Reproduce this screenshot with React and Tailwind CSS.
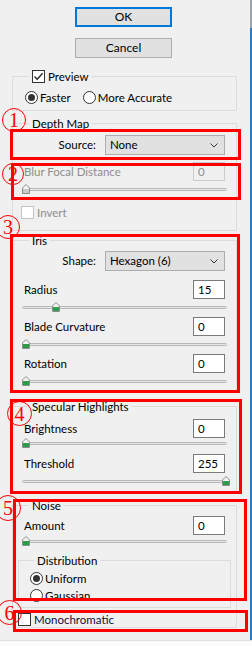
import React from "react";

function Check({ checked, disabled }) {
  return (
    <span
      className={`flex h-[13px] w-[13px] shrink-0 items-center justify-center border bg-white ${
        disabled ? "border-[#c4c4c4]" : "border-[#333333]"
      }`}
    >
      {checked && (
        <svg width="11" height="11" viewBox="0 0 11 11" fill="none" stroke="#222222" strokeWidth="1.3">
          <path d="M1.5 5.5 L4.2 8.3 L9.6 2.2" />
        </svg>
      )}
    </span>
  );
}

function Radio({ checked }) {
  return (
    <span className="flex h-[13px] w-[13px] shrink-0 items-center justify-center rounded-full border border-[#333333] bg-white">
      {checked && <span className="h-[7px] w-[7px] rounded-full bg-[#333333]" />}
    </span>
  );
}

// legend sits at the fieldset's padding-left, so its margin is offset from there
function Group({ title, legend = "ml-[5px] px-[3px]", className = "", children }) {
  return (
    <fieldset className={`border border-[#dcdcdc] ${className}`}>
      <legend className={`leading-[15px] ${legend}`}>{title}</legend>
      {children}
    </fieldset>
  );
}

function Select({ value }) {
  return (
    <div className="flex h-[20px] w-[120px] items-center justify-between border border-[#adadad] bg-[#e1e1e1] pl-[4px] pr-[6px]">
      <span>{value}</span>
      <svg width="8" height="5" viewBox="0 0 8 5" fill="none" stroke="#333333" strokeWidth="1">
        <path d="M0.5 0.5 L4 4 L7.5 0.5" />
      </svg>
    </div>
  );
}

function NumField({ value, disabled }) {
  return (
    <div
      className={`h-[19px] w-[32px] border pl-[4px] leading-[17px] ${
        disabled ? "border-[#cccccc] bg-[#f0f0f0] text-[#8d8d8d]" : "border-[#7a7a7a] bg-white"
      }`}
    >
      {value}
    </div>
  );
}

function FieldRow({ label, value, disabled, className = "" }) {
  return (
    <div className={`flex items-center justify-between ${className}`}>
      <span className={disabled ? "text-[#8d8d8d]" : ""}>{label}</span>
      <NumField value={value} disabled={disabled} />
    </div>
  );
}

function Slider({ value, max = 100, disabled, className = "h-[18px] pt-[7px]" }) {
  const left = -1 + (value / max) * 200;
  return (
    <div className={`mx-[-2px] ${className}`}>
      <div className="relative h-[3px] rounded-full border border-[#b8b8b8] bg-[#e7e7e7]">
        <svg className="absolute top-[-5px]" style={{ left }} width="8" height="10" viewBox="0 0 8 10">
          <path d="M4 0.5 L7.5 4 L7.5 9.5 L0.5 9.5 L0.5 4 Z" fill="#f4f4f4" stroke="#8c8c8c" />
          <path d="M1 5 H7 V9 H1 Z" fill={disabled ? "#c8c8c8" : "#2a9d46"} />
        </svg>
      </div>
    </div>
  );
}

function Circled({ n, className }) {
  return (
    <div
      className={`absolute flex items-center justify-center rounded-full border border-[#ff0000] font-['Liberation_Serif',serif] text-[20px] leading-none text-[#ff0000] ${className}`}
    >
      {n}
    </div>
  );
}

export default function App() {
  return (
    <div className="relative flex h-[646px] w-[252px] flex-col overflow-hidden bg-[#f0f0f0] font-[Lato,sans-serif] text-[11.5px] text-black">
      <div className="flex h-[640px]">
        <div className="flex w-[250px] flex-col pt-[7px]">
          <button className="ml-[75px] h-[20px] w-[97px] border-2 border-[#0078d7] bg-[#e1e1e1] text-[12px] leading-[16px]">
            OK
          </button>
          <button className="ml-[75px] mt-[11px] h-[20px] w-[97px] border border-[#adadad] bg-[#e1e1e1] text-[12px] leading-[18px]">
            Cancel
          </button>

          {/* PREVIEW */}
          <Group
            legend="ml-[4px] px-[3px]"
            className="ml-[12px] mt-[11px] w-[225px] pb-[5px] pl-[12px] pt-[6px]"
            title={
              <span className="flex items-center gap-[3px]">
                <Check checked />
                Preview
              </span>
            }
          >
            <div className="flex items-center gap-[12px] leading-[15px]">
              <span className="flex items-center gap-[2px]">
                <Radio checked />
                Faster
              </span>
              <span className="flex items-center gap-[2px]">
                <Radio />
                More Accurate
              </span>
            </div>
          </Group>

          {/* DEPTH MAP */}
          <Group title="Depth Map" className="ml-[12px] mt-[5px] w-[225px] px-[11px] pb-[10px] pt-[4px]">
            <div className="flex items-center justify-end gap-[9px]">
              <span>Source:</span>
              <Select value="None" />
            </div>
            <FieldRow className="mt-[7px]" label="Blur Focal Distance" value="0" disabled />
            <Slider value={0} disabled />
            <div className="ml-[-3px] mt-[6px] flex items-center gap-[3px] leading-[15px] text-[#8d8d8d]">
              <Check disabled />
              Invert
            </div>
          </Group>

          {/* IRIS */}
          <Group title="Iris" className="ml-[12px] mt-[2px] w-[225px] px-[11px] pt-[3px]">
            <div className="flex items-center justify-end gap-[9px]">
              <span>Shape:</span>
              <Select value="Hexagon (6)" />
            </div>
            <FieldRow className="mt-[9px]" label="Radius" value="15" />
            <Slider value={15} />
            <FieldRow label="Blade Curvature" value="0" />
            <Slider value={0} />
            <FieldRow label="Rotation" value="0" />
            <Slider value={0} />
          </Group>

          {/* SPECULAR HIGHLIGHTS */}
          <Group title="Specular Highlights" className="ml-[12px] mt-[7px] w-[225px] px-[11px] pt-[5px]">
            <FieldRow label="Brightness" value="0" />
            <Slider value={0} className="h-[16px] pt-[4px]" />
            <FieldRow label="Threshold" value="255" />
            <Slider value={255} max={255} />
          </Group>

          {/* NOISE */}
          <Group title="Noise" className="ml-[12px] mt-[6px] w-[225px] px-[11px] pt-[3px]">
            <FieldRow label="Amount" value="0" />
            <Slider value={0} className="h-[16px] pt-[5px]" />
            <Group
              title="Distribution"
              legend="ml-[4px] px-[3px]"
              className="mx-[-6px] mt-[2px] pb-[4px] pl-[11px] pt-[3px]"
            >
              <div className="flex items-center gap-[2px] leading-[15px]">
                <Radio checked />
                Uniform
              </div>
              <div className="mt-[2px] flex items-center gap-[2px] leading-[15px]">
                <Radio />
                Gaussian
              </div>
            </Group>
            <div className="ml-[-6px] mt-[4px] flex items-center gap-[3px] leading-[15px] text-[#101038]">
              <Check />
              Monochromatic
            </div>
          </Group>
        </div>

        {/* WINDOW EDGE */}
        <div className="flex w-[2px] flex-col">
          <div className="h-[28px] bg-[#9aa4b0]" />
          <div className="flex-1 bg-[#2b79c2]" />
        </div>
      </div>
      <div className="h-[6px] border-t border-[#dedede] bg-[#fbfbfb]" />

      {/* ANNOTATIONS */}
      <div className="absolute left-[10px] top-[129px] h-[31px] w-[231px] border-[3px] border-[#ff0000]" />
      <div className="absolute left-[11px] top-[163px] h-[37px] w-[230px] border-[3px] border-[#ff0000]" />
      <div className="absolute left-[10px] top-[234px] h-[159px] w-[230px] border-[3px] border-[#ff0000]" />
      <div className="absolute left-[10px] top-[399px] h-[95px] w-[232px] border-[3px] border-[#ff0000]" />
      <div className="absolute left-[13px] top-[499px] h-[102px] w-[234px] border-[3px] border-[#ff0000]" />
      <div className="absolute left-[13px] top-[610px] h-[22px] w-[235px] border-[3px] border-[#ff0000]" />

      <Circled n="1" className="left-[2px] top-[108px] h-[24px] w-[24px]" />
      <Circled n="2" className="left-[2px] top-[163px] h-[22px] w-[22px]" />
      <Circled n="3" className="left-[-4px] top-[215px] h-[24px] w-[24px]" />
      <Circled n="4" className="left-[7px] top-[401px] h-[25px] w-[25px]" />
      <Circled n="5" className="left-[-5px] top-[495px] h-[26px] w-[26px]" />
      <Circled n="6" className="left-[-3px] top-[600px] h-[25px] w-[25px]" />
    </div>
  );
}
